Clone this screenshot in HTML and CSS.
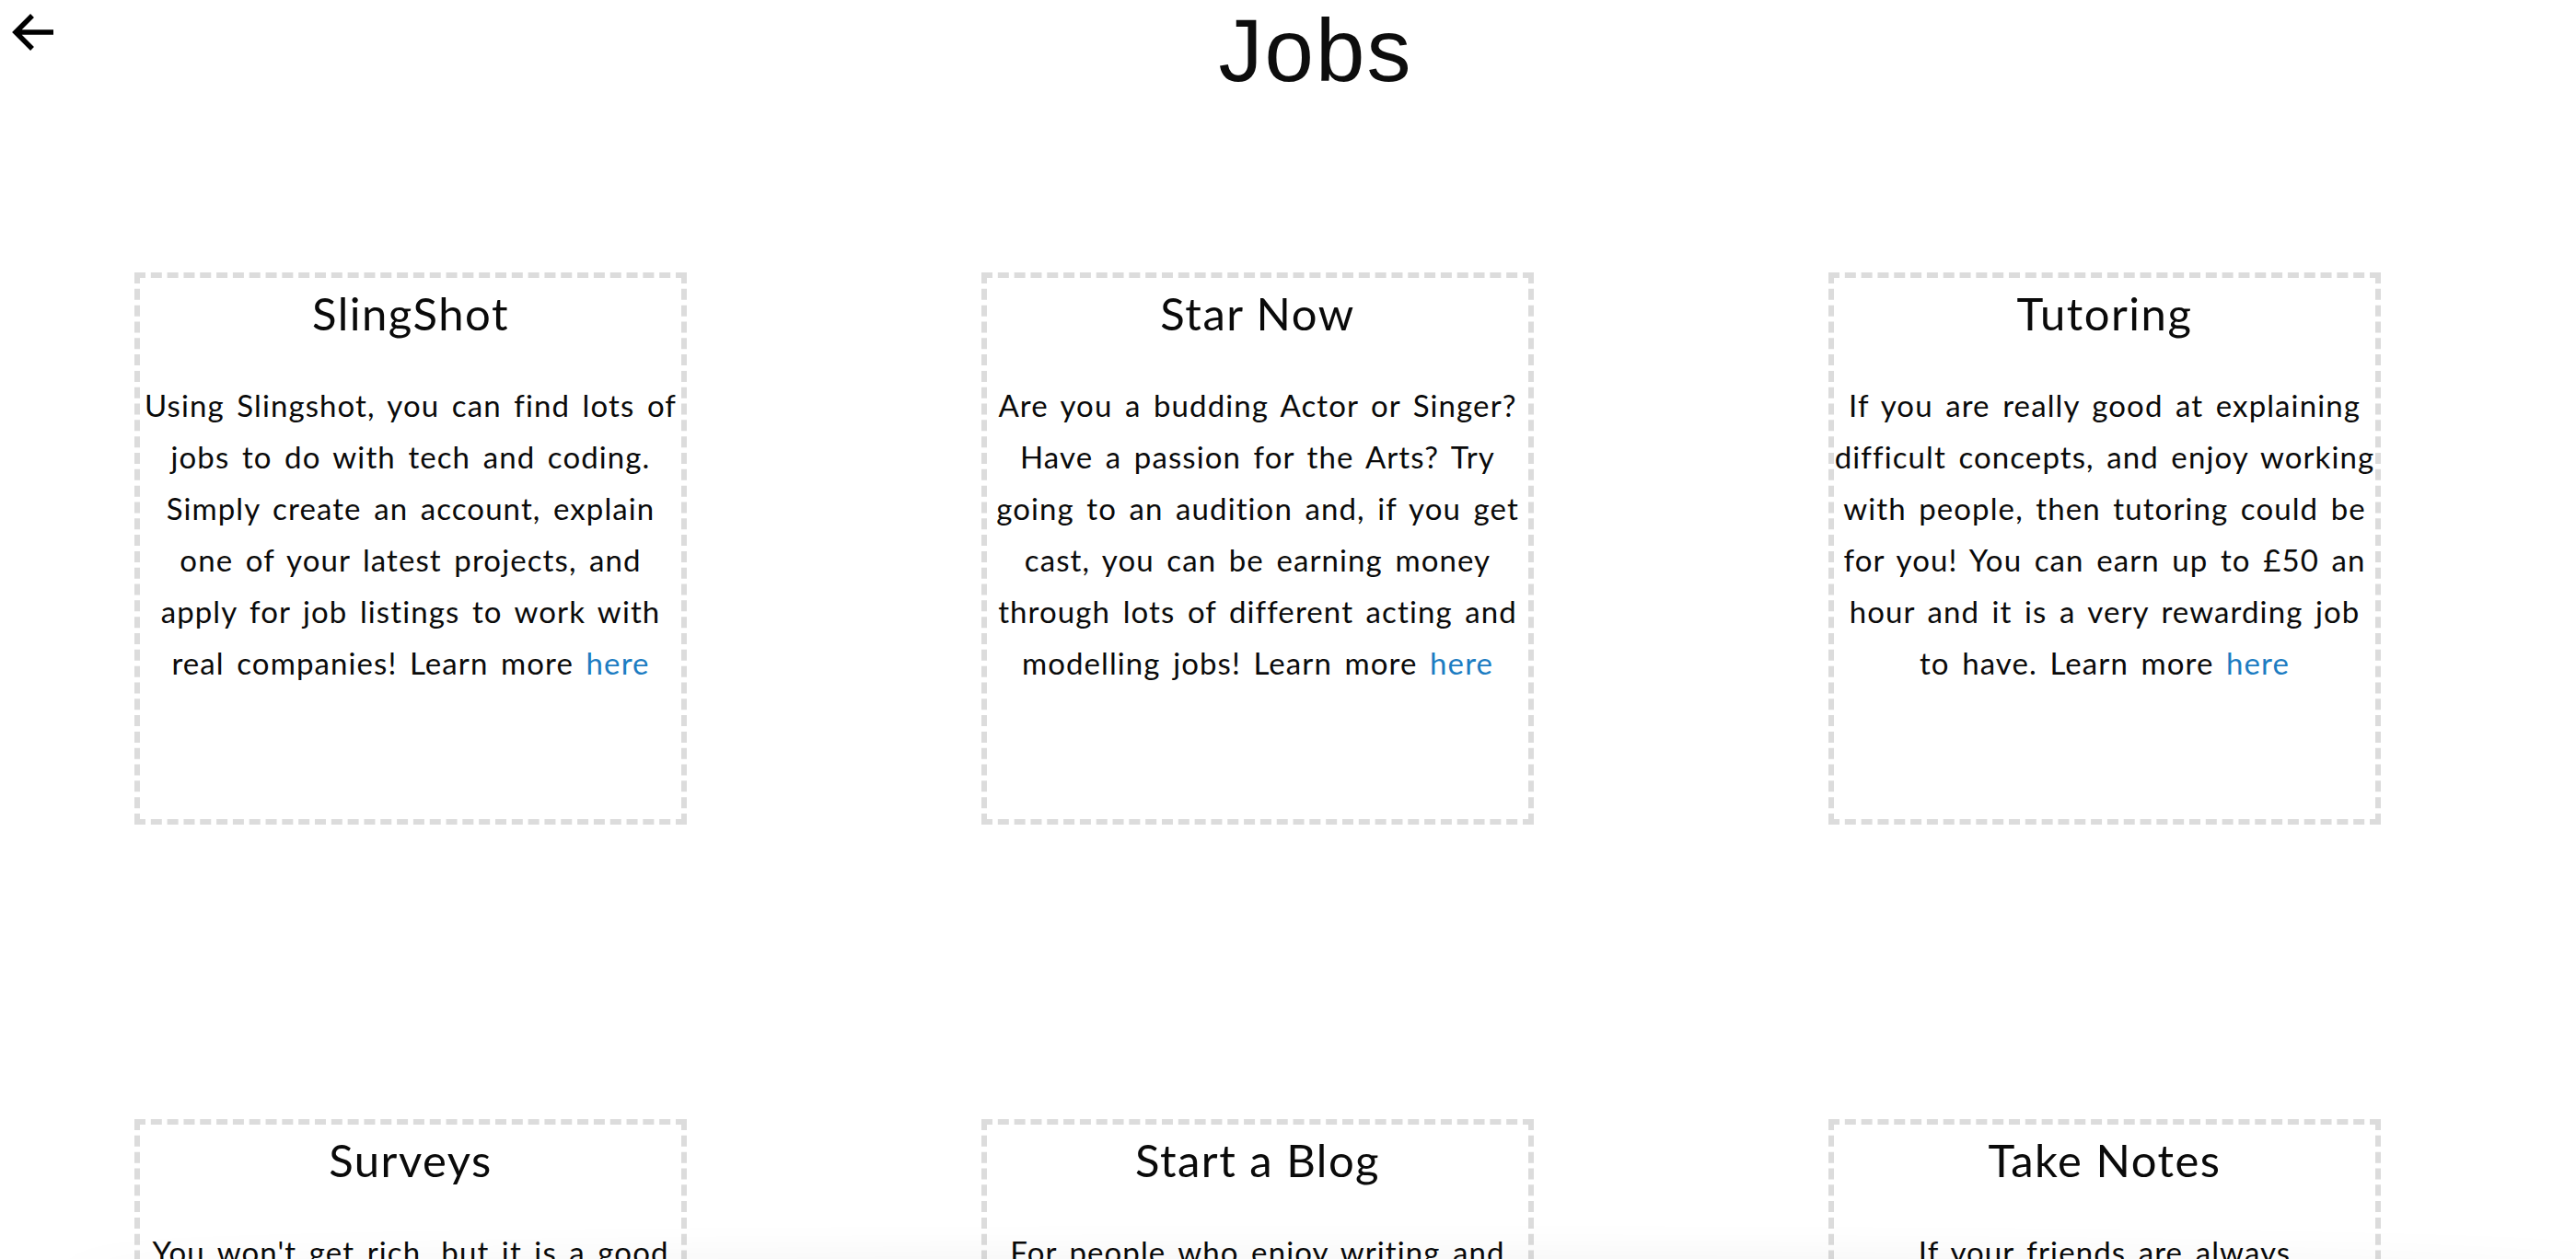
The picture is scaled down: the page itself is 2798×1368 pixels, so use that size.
FILE: index.html
```html
<!DOCTYPE html>
<html lang="en">
<head>
<meta charset="utf-8">
<title>Jobs</title>
<link rel="stylesheet" href="styles.css">
</head>
<body>
<header class="top">
  <a class="back" href="#" aria-label="Back">
    <svg width="60" height="70" viewBox="0 0 60 70"><path d="M58 35H18M35 17L17 35L35 53" fill="none" stroke="#000" stroke-width="5.5"/></svg>
  </a>
  <h1 class="page-title">Jobs</h1>
</header>
<main class="grid">
  <section class="card">
    <h2 class="card-title">SlingShot</h2>
    <p class="card-text">Using Slingshot, you can find lots of jobs to do with tech and coding. Simply create an account, explain one of your latest projects, and apply for job listings to work with real companies! Learn more <a href="#">here</a></p>
  </section>
  <section class="card">
    <h2 class="card-title">Star Now</h2>
    <p class="card-text">Are you a budding Actor or Singer? Have a passion for the Arts? Try going to an audition and, if you get cast, you can be earning money through lots of different acting and modelling jobs! Learn more <a href="#">here</a></p>
  </section>
  <section class="card">
    <h2 class="card-title">Tutoring</h2>
    <p class="card-text">If you are really good at explaining difficult concepts, and enjoy working with people, then tutoring could be for you! You can earn up to £50 an hour and it is a very rewarding job to have. Learn more <a href="#">here</a></p>
  </section>
  <section class="card">
    <h2 class="card-title">Surveys</h2>
    <p class="card-text">You won't get rich, but it is a good way to earn a little extra money in your spare time by sharing your opinions! Learn more <a href="#">here</a></p>
  </section>
  <section class="card">
    <h2 class="card-title">Start a Blog</h2>
    <p class="card-text">For people who enjoy writing and sharing their ideas, a blog can earn money through adverts and sponsorships. Learn more <a href="#">here</a></p>
  </section>
  <section class="card">
    <h2 class="card-title">Take Notes</h2>
    <p class="card-text">If your friends are always complimenting your notes, why not sell them online to other students? Learn more <a href="#">here</a></p>
  </section>
</main>
<div class="bottom-shade"></div>
</body>
</html>
```
FILE: styles.css
```css
html, body {
  margin: 0;
  padding: 0;
  background: #fff;
}

body {
  font-family: Lato, "Noto Sans", sans-serif;
  color: #0a0a0a;
}

.top {
  display: flex;
  align-items: flex-start;
}

.back {
  flex: 0 0 30px;
  height: 70px;
  display: block;
}

.back svg {
  display: block;
  overflow: visible;
}

.page-title {
  flex: 1;
  margin: 0;
  text-align: center;
  font-family: "Liberation Sans", Arial, sans-serif;
  font-weight: 400;
  font-size: 96px;
  line-height: 110px;
  letter-spacing: 2px;
  color: #0d0d0d;
}

.grid {
  display: grid;
  grid-template-columns: repeat(3, 600px);
  column-gap: 320px;
  row-gap: 320px;
  padding-left: 146px;
  margin-top: 186px;
  padding-bottom: 200px;
}

.card {
  box-sizing: border-box;
  width: 600px;
  height: 600px;
  border: 6px dashed #dcdcdc;
  padding-top: 9px;
  text-align: center;
}

.card-title {
  margin: 0;
  font-weight: 400;
  font-size: 49px;
  line-height: 58px;
  letter-spacing: 1.5px;
}

.card-text {
  margin: 43px 0 0;
  font-size: 33px;
  line-height: 56px;
  letter-spacing: 1.1px;
  word-spacing: 4px;
}

.card-text a {
  color: #1c7cc2;
  text-decoration: none;
}

.bottom-shade {
  position: fixed;
  left: 60px;
  right: -80px;
  bottom: -40px;
  height: 40px;
  border-radius: 50%;
  box-shadow: 0 0 50px rgba(0, 0, 0, 0.06);
  background: #fff;
}
```
